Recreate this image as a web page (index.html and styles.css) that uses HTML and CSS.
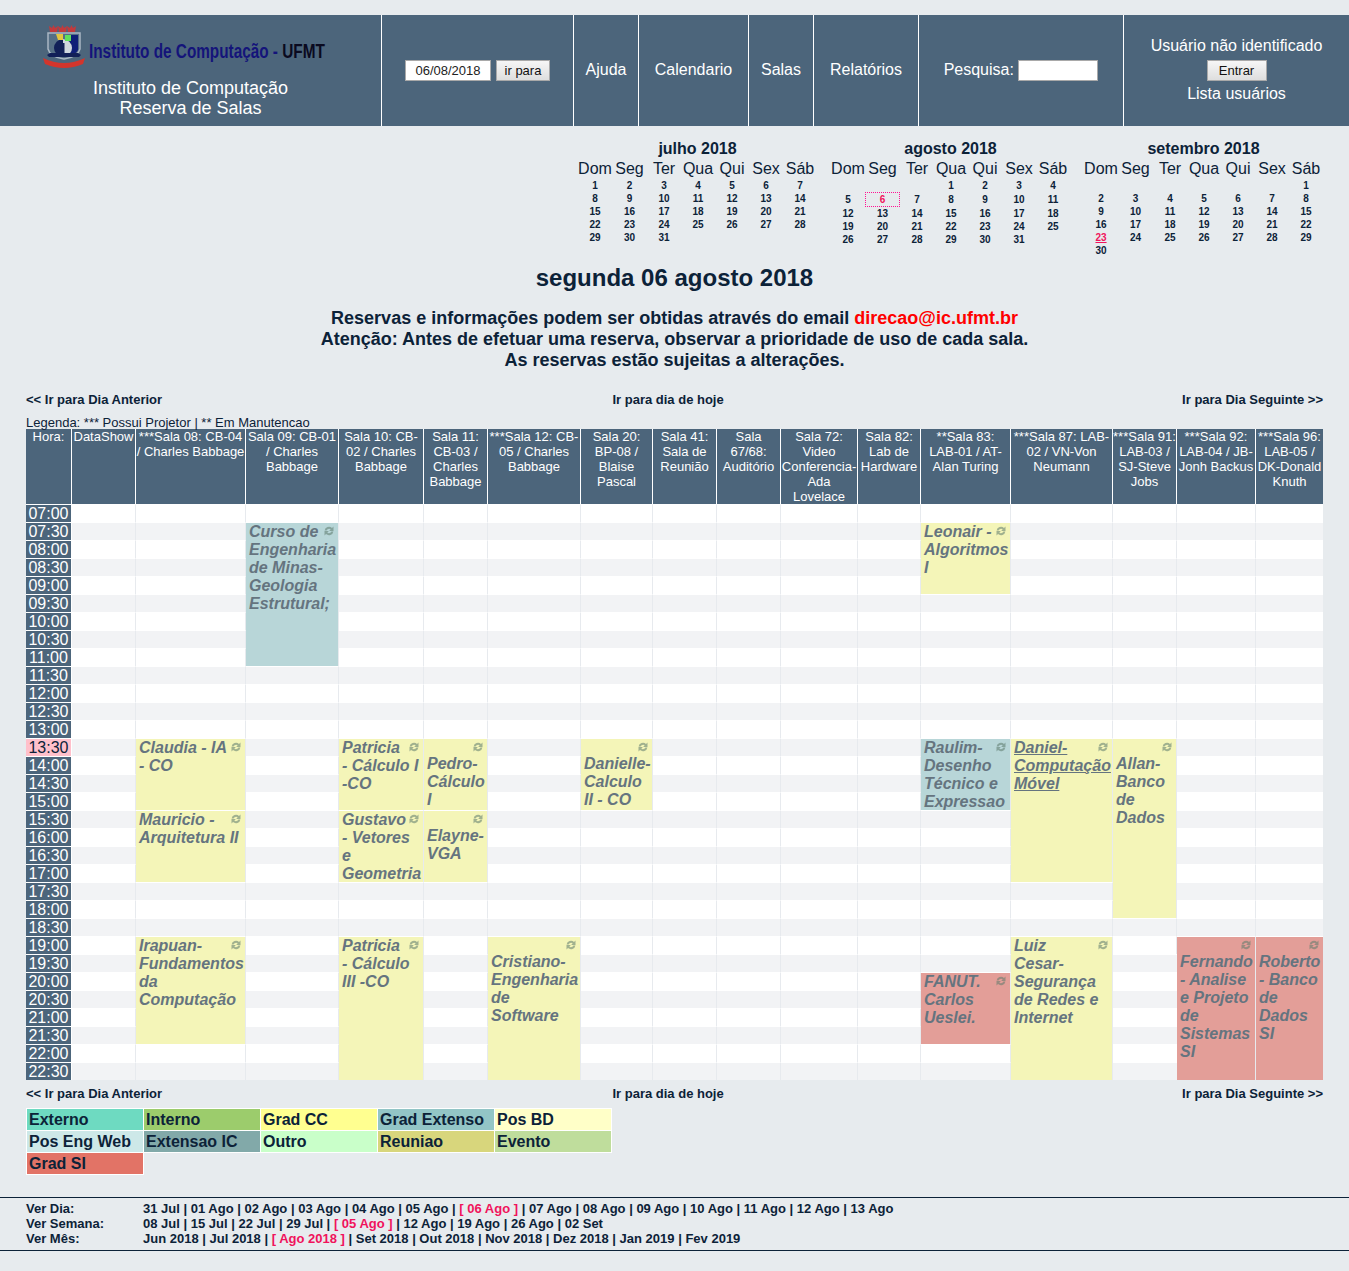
FILE: index.html
```html
<!DOCTYPE html>
<html lang="pt-BR">
<head>
    <meta charset="UTF-8">
    <title>Reserva de Salas</title>
    <link rel="stylesheet" href="styles.css">
</head>
<body>
    <svg class="defs" width="0" height="0">
        <symbol id="repeat" viewBox="0 0 10 10">
            <path d="M.6 4.600A4.500 4.500 0 0 1 8 1.900L9.500.6V5H5.100L6.700 3.400A2.600 2.600 0 0 0 2.600 4.600ZM9.400 5.400A4.500 4.500 0 0 1 2 8.100L.5 9.400V5H4.900L3.300 6.600A2.600 2.600 0 0 0 7.400 5.400Z"/>
        </symbol>
    </svg>

    <header class="topbar">
        <div class="top-cell top-logo">
            <svg class="logo" width="290" height="52" viewBox="0 0 290 52">
                <path d="M13 9l-1-6 3 2 1.500-3 1.500 3 3-2-1 6zM22 9l-1-6 3 2 1.500-3 1.500 3 3-2-1 6zM31 9l-1-6 3 2 1.500-3 1.500 3 3-2-1 6z" fill="#c23a3c" transform="translate(-3 0)"/>
                <path d="M8 10h32v16q-2 8-16 10q-14-2-16-10z" fill="#566f85" stroke="#a9b7c4" stroke-width="1.500"/>
                <path d="M29 12h9v15q-2 4-9 7z" fill="#0f1f78"/>
                <circle cx="23" cy="25" r="9" fill="#122058"/>
                <path d="M23 16a9 9 0 0 1 0 18z" fill="#cfd7df"/>
                <path d="M21 20h3.500v13h-3.500z" fill="#122058"/>
                <path d="M16 11h7v6h-5z" fill="#e4c53f"/>
                <rect x="25" y="12" width="6" height="6" fill="#5fe05a"/>
                <path d="M10 30l-3 2 2 2h30l2-2-3-2z" fill="#122058"/>
                <path d="M3 35q21 10 42 0l-2 6q-19 8-38 0z" fill="#d2352c"/>
                <text class="logo-text" transform="translate(49 35) scale(.73 1)">Instituto de Computação - <tspan class="logo-ufmt">UFMT</tspan></text>
            </svg>
            <div>Instituto de Computação</div>
            <div>Reserva de Salas</div>
        </div>
        <div class="top-cell top-date">
            <input class="date-input" type="text" value="06/08/2018">
            <button class="btn">ir para</button>
        </div>
        <a class="top-cell top-ajuda">Ajuda</a>
        <a class="top-cell top-cal">Calendario</a>
        <a class="top-cell top-salas">Salas</a>
        <a class="top-cell top-rel">Relatórios</a>
        <div class="top-cell top-search"><span class="search-label">Pesquisa:&nbsp;</span><input class="search-input" type="text"></div>
        <div class="top-cell top-user">
            <div class="user-name">Usuário não identificado</div>
            <button class="btn btn-login">Entrar</button>
            <div class="user-list">Lista usuários</div>
        </div>
    </header>

    <section class="calendars">
        <table class="month">
            <caption>julho 2018</caption>
            <tr><th>Dom</th><th>Seg</th><th>Ter</th><th>Qua</th><th>Qui</th><th>Sex</th><th>Sáb</th></tr>
            <tr><td>1</td><td>2</td><td>3</td><td>4</td><td>5</td><td>6</td><td>7</td></tr>
            <tr><td>8</td><td>9</td><td>10</td><td>11</td><td>12</td><td>13</td><td>14</td></tr>
            <tr><td>15</td><td>16</td><td>17</td><td>18</td><td>19</td><td>20</td><td>21</td></tr>
            <tr><td>22</td><td>23</td><td>24</td><td>25</td><td>26</td><td>27</td><td>28</td></tr>
            <tr><td>29</td><td>30</td><td>31</td><td></td><td></td><td></td><td></td></tr>
        </table>
        <table class="month">
            <caption>agosto 2018</caption>
            <tr><th>Dom</th><th>Seg</th><th>Ter</th><th>Qua</th><th>Qui</th><th>Sex</th><th>Sáb</th></tr>
            <tr><td></td><td></td><td></td><td>1</td><td>2</td><td>3</td><td>4</td></tr>
            <tr><td>5</td><td class="today">6</td><td>7</td><td>8</td><td>9</td><td>10</td><td>11</td></tr>
            <tr><td>12</td><td>13</td><td>14</td><td>15</td><td>16</td><td>17</td><td>18</td></tr>
            <tr><td>19</td><td>20</td><td>21</td><td>22</td><td>23</td><td>24</td><td>25</td></tr>
            <tr><td>26</td><td>27</td><td>28</td><td>29</td><td>30</td><td>31</td><td></td></tr>
        </table>
        <table class="month">
            <caption>setembro 2018</caption>
            <tr><th>Dom</th><th>Seg</th><th>Ter</th><th>Qua</th><th>Qui</th><th>Sex</th><th>Sáb</th></tr>
            <tr><td></td><td></td><td></td><td></td><td></td><td></td><td>1</td></tr>
            <tr><td>2</td><td>3</td><td>4</td><td>5</td><td>6</td><td>7</td><td>8</td></tr>
            <tr><td>9</td><td>10</td><td>11</td><td>12</td><td>13</td><td>14</td><td>15</td></tr>
            <tr><td>16</td><td>17</td><td>18</td><td>19</td><td>20</td><td>21</td><td>22</td></tr>
            <tr><td class="holiday">23</td><td>24</td><td>25</td><td>26</td><td>27</td><td>28</td><td>29</td></tr>
            <tr><td>30</td><td></td><td></td><td></td><td></td><td></td><td></td></tr>
        </table>
    </section>

    <h1 class="day-title">segunda 06 agosto 2018</h1>

    <div class="notice">
        <div>Reservas e informações podem ser obtidas através do email <a class="mail">direcao@ic.ufmt.br</a></div>
        <div>Atenção: Antes de efetuar uma reserva, observar a prioridade de uso de cada sala.</div>
        <div>As reservas estão sujeitas a alterações.</div>
    </div>

    <nav class="day-nav day-nav-top">
        <a>&lt;&lt; Ir para Dia Anterior</a>
        <a>Ir para dia de hoje</a>
        <a>Ir para Dia Seguinte &gt;&gt;</a>
    </nav>

    <div class="room-legend">Legenda: *** Possui Projetor | ** Em Manutencao</div>

    <table class="grid">
        <colgroup>
            <col class="w46"><col class="w64"><col class="w110"><col class="w93"><col class="w85"><col class="w64"><col class="w93"><col class="w72"><col class="w64"><col class="w64"><col class="w77"><col class="w63"><col class="w90"><col class="w102"><col class="w64"><col class="w79"><col class="w67">
        </colgroup>
        <thead>
            <tr>
                <th>Hora:</th>
                <th>DataShow</th>
                <th>***Sala 08: CB-04 / Charles Babbage</th>
                <th>Sala 09: CB-01 / Charles Babbage</th>
                <th>Sala 10: CB-02 / Charles Babbage</th>
                <th>Sala 11: CB-03 / Charles Babbage</th>
                <th>***Sala 12: CB-05 / Charles Babbage</th>
                <th>Sala 20: BP-08 / Blaise Pascal</th>
                <th>Sala 41: Sala de Reunião</th>
                <th>Sala 67/68: Auditório</th>
                <th>Sala 72: Video Conferencia-Ada Lovelace</th>
                <th>Sala 82: Lab de Hardware</th>
                <th>**Sala 83: LAB-01 / AT-Alan Turing</th>
                <th>***Sala 87: LAB-02 / VN-Von Neumann</th>
                <th>***Sala 91: LAB-03 / SJ-Steve Jobs</th>
                <th>***Sala 92: LAB-04 / JB-Jonh Backus</th>
                <th>***Sala 96: LAB-05 / DK-Donald Knuth</th>
            </tr>
        </thead>
        <tbody>
            <tr><td class="hour">07:00</td><td></td><td></td><td></td><td></td><td></td><td></td><td></td><td></td><td></td><td></td><td></td><td></td><td></td><td></td><td></td><td></td></tr>
            <tr class="alt"><td class="hour">07:30</td><td></td><td></td>
                <td class="entry blue" rowspan="8"><svg class="repeat"><use href="#repeat"/></svg><div class="txt">Curso de Engenharia de Minas-Geologia Estrutural;</div></td>
                <td></td><td></td><td></td><td></td><td></td><td></td><td></td><td></td>
                <td class="entry yellow" rowspan="4"><svg class="repeat"><use href="#repeat"/></svg><div class="txt">Leonair - Algoritmos I</div></td>
                <td></td><td></td><td></td><td></td></tr>
            <tr><td class="hour">08:00</td><td></td><td></td><td></td><td></td><td></td><td></td><td></td><td></td><td></td><td></td><td></td><td></td><td></td><td></td></tr>
            <tr class="alt"><td class="hour">08:30</td><td></td><td></td><td></td><td></td><td></td><td></td><td></td><td></td><td></td><td></td><td></td><td></td><td></td><td></td></tr>
            <tr><td class="hour">09:00</td><td></td><td></td><td></td><td></td><td></td><td></td><td></td><td></td><td></td><td></td><td></td><td></td><td></td><td></td></tr>
            <tr class="alt"><td class="hour">09:30</td><td></td><td></td><td></td><td></td><td></td><td></td><td></td><td></td><td></td><td></td><td></td><td></td><td></td><td></td><td></td></tr>
            <tr><td class="hour">10:00</td><td></td><td></td><td></td><td></td><td></td><td></td><td></td><td></td><td></td><td></td><td></td><td></td><td></td><td></td><td></td></tr>
            <tr class="alt"><td class="hour">10:30</td><td></td><td></td><td></td><td></td><td></td><td></td><td></td><td></td><td></td><td></td><td></td><td></td><td></td><td></td><td></td></tr>
            <tr><td class="hour">11:00</td><td></td><td></td><td></td><td></td><td></td><td></td><td></td><td></td><td></td><td></td><td></td><td></td><td></td><td></td><td></td></tr>
            <tr class="alt"><td class="hour">11:30</td><td></td><td></td><td></td><td></td><td></td><td></td><td></td><td></td><td></td><td></td><td></td><td></td><td></td><td></td><td></td><td></td></tr>
            <tr><td class="hour">12:00</td><td></td><td></td><td></td><td></td><td></td><td></td><td></td><td></td><td></td><td></td><td></td><td></td><td></td><td></td><td></td><td></td></tr>
            <tr class="alt"><td class="hour">12:30</td><td></td><td></td><td></td><td></td><td></td><td></td><td></td><td></td><td></td><td></td><td></td><td></td><td></td><td></td><td></td><td></td></tr>
            <tr><td class="hour">13:00</td><td></td><td></td><td></td><td></td><td></td><td></td><td></td><td></td><td></td><td></td><td></td><td></td><td></td><td></td><td></td><td></td></tr>
            <tr class="alt"><td class="hour now">13:30</td><td></td>
                <td class="entry yellow" rowspan="4"><svg class="repeat"><use href="#repeat"/></svg><div class="txt">Claudia - IA - CO</div></td>
                <td></td>
                <td class="entry yellow" rowspan="4"><svg class="repeat"><use href="#repeat"/></svg><div class="txt">Patricia - Cálculo I -CO</div></td>
                <td class="entry yellow" rowspan="4"><svg class="repeat"><use href="#repeat"/></svg><div class="txt">Pedro-Cálculo I</div></td>
                <td></td>
                <td class="entry yellow" rowspan="4"><svg class="repeat"><use href="#repeat"/></svg><div class="txt">Danielle-Calculo II - CO</div></td>
                <td></td><td></td><td></td><td></td>
                <td class="entry blue" rowspan="4"><svg class="repeat"><use href="#repeat"/></svg><div class="txt">Raulim-Desenho Técnico e Expressao</div></td>
                <td class="entry yellow" rowspan="8"><svg class="repeat"><use href="#repeat"/></svg><div class="txt"><u>Daniel-Computação Móvel</u></div></td>
                <td class="entry yellow" rowspan="10"><svg class="repeat"><use href="#repeat"/></svg><div class="txt">Allan-Banco de Dados</div></td>
                <td></td><td></td></tr>
            <tr><td class="hour">14:00</td><td></td><td></td><td></td><td></td><td></td><td></td><td></td><td></td><td></td></tr>
            <tr class="alt"><td class="hour">14:30</td><td></td><td></td><td></td><td></td><td></td><td></td><td></td><td></td><td></td></tr>
            <tr><td class="hour">15:00</td><td></td><td></td><td></td><td></td><td></td><td></td><td></td><td></td><td></td></tr>
            <tr class="alt"><td class="hour">15:30</td><td></td>
                <td class="entry yellow" rowspan="4"><svg class="repeat"><use href="#repeat"/></svg><div class="txt">Mauricio - Arquitetura II</div></td>
                <td></td>
                <td class="entry yellow" rowspan="4"><svg class="repeat"><use href="#repeat"/></svg><div class="txt">Gustavo - Vetores e Geometria</div></td>
                <td class="entry yellow" rowspan="4"><svg class="repeat"><use href="#repeat"/></svg><div class="txt">Elayne-VGA</div></td>
                <td></td><td></td><td></td><td></td><td></td><td></td><td></td><td></td><td></td></tr>
            <tr><td class="hour">16:00</td><td></td><td></td><td></td><td></td><td></td><td></td><td></td><td></td><td></td><td></td><td></td></tr>
            <tr class="alt"><td class="hour">16:30</td><td></td><td></td><td></td><td></td><td></td><td></td><td></td><td></td><td></td><td></td><td></td></tr>
            <tr><td class="hour">17:00</td><td></td><td></td><td></td><td></td><td></td><td></td><td></td><td></td><td></td><td></td><td></td></tr>
            <tr class="alt"><td class="hour">17:30</td><td></td><td></td><td></td><td></td><td></td><td></td><td></td><td></td><td></td><td></td><td></td><td></td><td></td><td></td><td></td></tr>
            <tr><td class="hour">18:00</td><td></td><td></td><td></td><td></td><td></td><td></td><td></td><td></td><td></td><td></td><td></td><td></td><td></td><td></td><td></td></tr>
            <tr class="alt"><td class="hour">18:30</td><td></td><td></td><td></td><td></td><td></td><td></td><td></td><td></td><td></td><td></td><td></td><td></td><td></td><td></td><td></td><td></td></tr>
            <tr><td class="hour">19:00</td><td></td>
                <td class="entry yellow" rowspan="6"><svg class="repeat"><use href="#repeat"/></svg><div class="txt">Irapuan-Fundamentos da Computação</div></td>
                <td></td>
                <td class="entry yellow" rowspan="8"><svg class="repeat"><use href="#repeat"/></svg><div class="txt">Patricia - Cálculo III -CO</div></td>
                <td></td>
                <td class="entry yellow" rowspan="8"><svg class="repeat"><use href="#repeat"/></svg><div class="txt">Cristiano-Engenharia de Software</div></td>
                <td></td><td></td><td></td><td></td><td></td><td></td>
                <td class="entry yellow" rowspan="8"><svg class="repeat"><use href="#repeat"/></svg><div class="txt">Luiz Cesar-Segurança de Redes e Internet</div></td>
                <td></td>
                <td class="entry red" rowspan="8"><svg class="repeat"><use href="#repeat"/></svg><div class="txt">Fernando - Analise e Projeto de Sistemas SI</div></td>
                <td class="entry red" rowspan="8"><svg class="repeat"><use href="#repeat"/></svg><div class="txt">Roberto - Banco de Dados SI</div></td></tr>
            <tr class="alt"><td class="hour">19:30</td><td></td><td></td><td></td><td></td><td></td><td></td><td></td><td></td><td></td><td></td></tr>
            <tr><td class="hour">20:00</td><td></td><td></td><td></td><td></td><td></td><td></td><td></td><td></td>
                <td class="entry red" rowspan="4"><svg class="repeat"><use href="#repeat"/></svg><div class="txt">FANUT. Carlos Ueslei.</div></td>
                <td></td></tr>
            <tr class="alt"><td class="hour">20:30</td><td></td><td></td><td></td><td></td><td></td><td></td><td></td><td></td><td></td></tr>
            <tr><td class="hour">21:00</td><td></td><td></td><td></td><td></td><td></td><td></td><td></td><td></td><td></td></tr>
            <tr class="alt"><td class="hour">21:30</td><td></td><td></td><td></td><td></td><td></td><td></td><td></td><td></td><td></td></tr>
            <tr><td class="hour">22:00</td><td></td><td></td><td></td><td></td><td></td><td></td><td></td><td></td><td></td><td></td><td></td></tr>
            <tr class="alt"><td class="hour">22:30</td><td></td><td></td><td></td><td></td><td></td><td></td><td></td><td></td><td></td><td></td><td></td></tr>
        </tbody>
    </table>

    <nav class="day-nav day-nav-bottom">
        <a>&lt;&lt; Ir para Dia Anterior</a>
        <a>Ir para dia de hoje</a>
        <a>Ir para Dia Seguinte &gt;&gt;</a>
    </nav>

    <table class="types">
        <tr><td class="t-externo">Externo</td><td class="t-interno">Interno</td><td class="t-gradcc">Grad CC</td><td class="t-gradext">Grad Extenso</td><td class="t-posbd">Pos BD</td></tr>
        <tr><td class="t-posweb">Pos Eng Web</td><td class="t-extic">Extensao IC</td><td class="t-outro">Outro</td><td class="t-reuniao">Reuniao</td><td class="t-evento">Evento</td></tr>
        <tr><td class="t-gradsi">Grad SI</td></tr>
    </table>

    <footer class="views">
        <div class="view-row"><span class="view-label">Ver Dia:</span><span>31 Jul | 01 Ago | 02 Ago | 03 Ago | 04 Ago | 05 Ago | <span class="current">[ 06 Ago ]</span> | 07 Ago | 08 Ago | 09 Ago | 10 Ago | 11 Ago | 12 Ago | 13 Ago</span></div>
        <div class="view-row"><span class="view-label">Ver Semana:</span><span>08 Jul | 15 Jul | 22 Jul | 29 Jul | <span class="current">[ 05 Ago ]</span> | 12 Ago | 19 Ago | 26 Ago | 02 Set</span></div>
        <div class="view-row"><span class="view-label">Ver Mês:</span><span>Jun 2018 | Jul 2018 | <span class="current">[ Ago 2018 ]</span> | Set 2018 | Out 2018 | Nov 2018 | Dez 2018 | Jan 2019 | Fev 2019</span></div>
    </footer>
</body>
</html>
```

FILE: styles.css
```css
:root {
    --bar-color: #4c657b;
    --page-color: #e7ebee;
    --text-color: #0c2238;
    --pink: #f0135c;
}
body {
    font-family: "Liberation Sans", Arial, sans-serif;
    color: var(--text-color);
    background-color: var(--page-color);
    margin: 0;
    padding: 15px 0 20px;
}
a {
    color: inherit;
}
.defs {
    display: block;
    height: 0;
}

/* top bar */
.topbar {
    display: flex;
    height: 111px;
    background: var(--bar-color);
    color: #fff;
    font-size: 16px;
}
.top-cell {
    box-sizing: border-box;
    display: flex;
    align-items: center;
    justify-content: center;
    padding-bottom: 2px;
    border-right: 1px solid #fff;
}
.top-logo {
    width: 382px;
    flex-direction: column;
    justify-content: flex-start;
    padding-bottom: 0;
    font-size: 18px;
    line-height: 20px;
}
.logo {
    display: block;
    margin: 8px 0 3px -12px;
}
.logo-text {
    font: bold 21px "Liberation Sans", Arial, sans-serif;
    fill: #14147a;
}
.logo-ufmt {
    fill: #0a0a20;
}
.top-date {
    width: 192px;
    gap: 5px;
    padding-bottom: 0;
}
.top-ajuda { width: 65px; }
.top-cal { width: 110px; }
.top-salas { width: 65px; }
.top-rel { width: 105px; }
.top-search {
    width: 205px;
    padding-bottom: 0;
}
.search-label {
    margin-bottom: 2px;
}
.top-user {
    flex: 1;
    flex-direction: column;
    border-right: 0;
    padding-bottom: 2px;
    line-height: 23px;
}
.user-name {
    margin-bottom: 3px;
}
.user-list {
    margin-top: 1px;
}
input {
    box-sizing: border-box;
    height: 21px;
    border: 1px solid #a9a9a9;
    background: #fff;
    padding: 0;
    font: 13px "Liberation Sans", Arial, sans-serif;
    color: #222;
    text-align: center;
}
.date-input { width: 86px; }
.search-input { width: 80px; }
.btn {
    box-sizing: border-box;
    width: 54px;
    height: 21px;
    padding: 0;
    border: 1px solid #a9a9a9;
    background: linear-gradient(#f6f6f6, #dedede);
    font: 13px "Liberation Sans", Arial, sans-serif;
    color: #111;
}
.btn-login {
    width: 60px;
}

/* small calendars */
.calendars {
    display: flex;
    justify-content: flex-end;
    align-items: flex-start;
    gap: 14px;
    padding: 12px 26px 0 0;
}
.month {
    border-collapse: separate;
    border-spacing: 0;
    table-layout: fixed;
    width: 239px;
}
.month caption {
    font-size: 16px;
    font-weight: bold;
    line-height: 20px;
    padding-top: 1px;
}
.month th {
    font-size: 16px;
    font-weight: normal;
    line-height: 20px;
    padding: 0;
}
.month th:nth-child(2) {
    width: 35px;
}
.month td {
    font-size: 10px;
    font-weight: bold;
    line-height: 13px;
    height: 13px;
    padding: 0;
    text-align: center;
}
.month .today {
    box-sizing: border-box;
    color: var(--pink);
    border: 1px dotted #ff1493;
}
.month .holiday {
    color: var(--pink);
    text-decoration: underline;
}

.day-title {
    font-size: 24px;
    line-height: 28px;
    text-align: center;
    margin: 7px 0 0;
}
.notice {
    margin-top: 16px;
    font-size: 18px;
    font-weight: bold;
    line-height: 21px;
    text-align: center;
}
.mail {
    color: #f00;
}

.day-nav {
    display: flex;
    justify-content: space-between;
    margin: 0 26px;
    font-size: 13px;
    font-weight: bold;
    line-height: 15px;
}
.day-nav a:nth-child(2) {
    margin-right: 8px;
}
.day-nav-top {
    margin-top: 21px;
}
.day-nav-bottom {
    margin-top: 6px;
}
.room-legend {
    margin: 8px 26px 0;
    font-size: 13px;
    line-height: 15px;
    height: 14px;
}

/* main grid */
.grid {
    table-layout: fixed;
    width: 1297px;
    margin: 0 26px;
    border-collapse: separate;
    border-spacing: 0;
    background: #fff;
}
.w46 { width: 46px; }
.w63 { width: 63px; }
.w64 { width: 64px; }
.w67 { width: 67px; }
.w72 { width: 72px; }
.w77 { width: 77px; }
.w79 { width: 79px; }
.w85 { width: 85px; }
.w90 { width: 90px; }
.w93 { width: 93px; }
.w102 { width: 102px; }
.w110 { width: 110px; }
.grid th {
    box-sizing: border-box;
    height: 75px;
    padding: 0;
    background: var(--bar-color);
    color: #fff;
    font-size: 13px;
    font-weight: normal;
    line-height: 15px;
    vertical-align: top;
    border-right: 1px solid #fff;
}
.grid th:last-child {
    border-right: 0;
}
.grid td {
    box-sizing: border-box;
    height: 18px;
    padding: 0;
    border-top: 1px solid #fff;
    border-right: 1px solid #e7eaee;
    vertical-align: top;
}
.grid td:last-child {
    border-right: 0;
}
.grid .alt td {
    background: #f2f3f5;
}
.grid td.hour {
    background: var(--bar-color);
    color: #fff;
    font-size: 16px;
    line-height: 17px;
    text-align: center;
    border-right: 1px solid #fff;
}
.grid td.now {
    background: #ffc0cb;
    color: #0c2238;
}
.grid td.entry {
    padding-left: 3px;
    font-size: 16px;
    font-weight: bold;
    font-style: italic;
    line-height: 18px;
    color: #65747f;
}
.txt {
    margin-bottom: -3px;
}
.repeat {
    float: right;
    width: 10px;
    height: 10px;
    margin: 3px 4px 3px 2px;
    fill: #5d7a6c;
    opacity: .55;
}
.grid td.yellow,
.grid .alt td.yellow { background: #f4f5b8; }
.grid td.blue,
.grid .alt td.blue { background: #b8d6d8; }
.grid td.red,
.grid .alt td.red { background: #e39e98; }

/* booking types */
.types {
    width: 586px;
    margin: 7px 0 0 26px;
    border-collapse: collapse;
    table-layout: fixed;
    font-size: 16px;
    font-weight: bold;
    line-height: 20px;
}
.types td {
    border: 1px solid #fff;
    padding: 0 0 0 2px;
    height: 21px;
}
.t-externo { background: #6edac1; }
.t-interno { background: #9ccc6c; }
.t-gradcc { background: #ffff90; }
.t-gradext { background: #93c5c6; }
.t-posbd { background: #ffffc8; }
.t-posweb { background: #cde8e8; }
.t-extic { background: #82a9a9; }
.t-outro { background: #c9ffc9; }
.t-reuniao { background: #d8d67c; }
.t-evento { background: #bfdd9c; }
.t-gradsi { background: #e27366; }

/* bottom links */
.views {
    margin-top: 22px;
    padding: 3px 26px 4px;
    border-top: 1px solid var(--text-color);
    border-bottom: 1px solid var(--text-color);
    font-size: 13px;
    font-weight: bold;
    line-height: 15px;
}
.view-row {
    display: flex;
}
.view-label {
    width: 117px;
}
.current {
    color: var(--pink);
}
```
